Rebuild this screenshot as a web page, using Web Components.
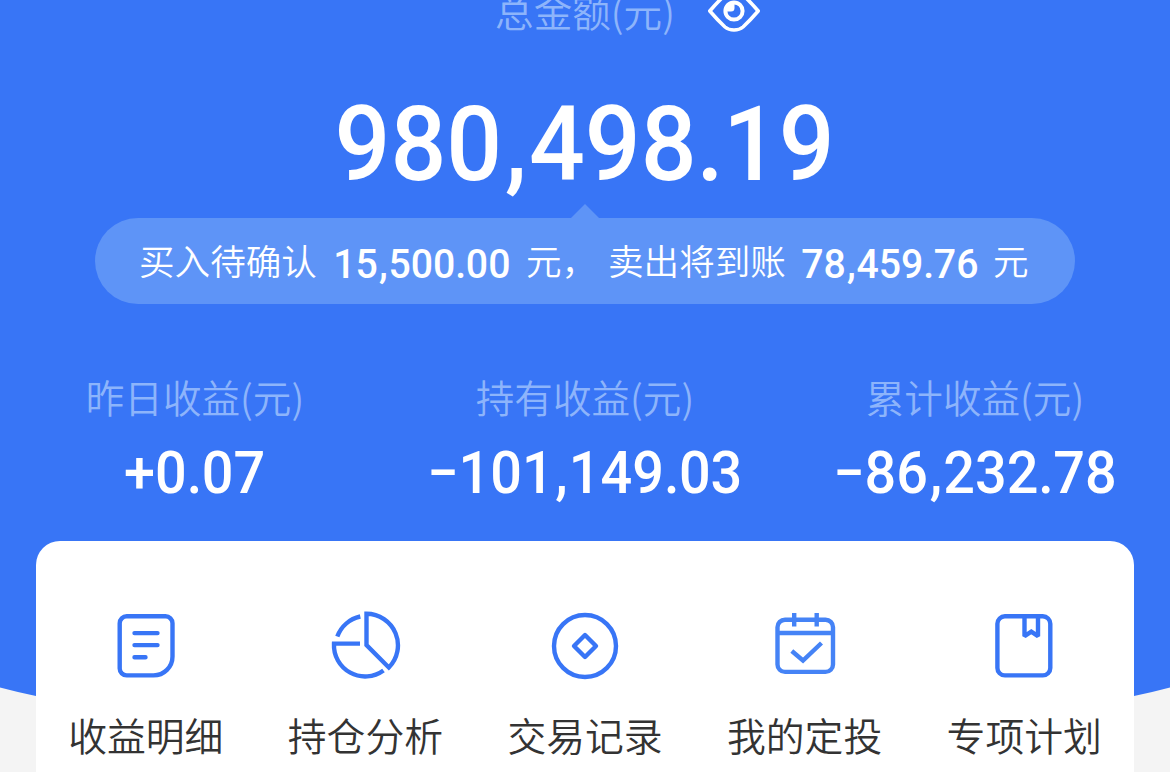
<!DOCTYPE html>
<html lang="zh-CN">
<head>
<meta charset="utf-8">
<title>总金额</title>
<style>
  :root {
    --blue: #3875f6;
    --pale: #8db4fb;
    --pill: #5e94f7;
    --ink: #333;
  }
  html, body { margin: 0; height: 772px; overflow: hidden; }
  body { background: #f4f4f4; font-family: "Noto Sans CJK SC", sans-serif; font-weight: 350; }
</style>
</head>
<body>
<fund-page>
  <total-amount label="总金额(元)" value="980,498.19"></total-amount>
  <pending-pill>
    <span>买入待确认</span><money-value size="41.5" value="15,500.00" style="width:176px;margin:5px 16px 0 17px"></money-value><span>元，</span>
    <span style="margin-left:11px">卖出将到账</span><money-value size="41.5" value="78,459.76" style="width:176px;margin:5px 15px 0 16px"></money-value><span>元</span>
  </pending-pill>
  <stat-row>
    <stat-item label="昨日收益(元)" value="+0.07"></stat-item>
    <stat-item label="持有收益(元)" value="−101,149.03"></stat-item>
    <stat-item label="累计收益(元)" value="−86,232.78"></stat-item>
  </stat-row>
  <action-card>
    <action-item icon="detail">收益明细</action-item>
    <action-item icon="pie">持仓分析</action-item>
    <action-item icon="coin">交易记录</action-item>
    <action-item icon="calendar">我的定投</action-item>
    <action-item icon="book">专项计划</action-item>
  </action-card>
</fund-page>

<script>
/* Icons share a 72x72 box, strokes inherit currentColor */
const ICONS = {
  detail: `
    <path d="M16.700 7.300H55.500A7 7 0 0 1 62.500 14.300V47.400A19 19 0 0 1 43.500 66.400H16.700A7 7 0 0 1 9.700 59.400V14.300A7 7 0 0 1 16.700 7.300Z"/>
    <path stroke-linecap="round" d="M24.500 24.100H47.500M24.500 36.100H47.500M24.500 48.200H35.500"/>`,
  pie: `
    <path d="M37.500 4.800A31.500 31.500 0 0 1 59.800 58.500L37.500 36Z"/>
    <path d="M8.300 27.500A32 32 0 0 1 31.300 7.500M31 34.600H5A31.200 31.200 0 0 0 54.500 61.500"/>`,
  coin: `
    <circle cx="36" cy="37" r="31"/>
    <path stroke-linejoin="round" d="M36 26L47 37L36 48L25 37Z"/>`,
  calendar: `
    <g stroke="#4583f6"><rect x="8.500" y="10.700" width="55.500" height="52.200" rx="7.500"/>
    <path d="M8.500 24H64M25.200 4V17.500M47.700 4V17.500M22.800 42L34 51.500L52.500 34"/></g>`,
  book: `
    <rect x="9.400" y="7.300" width="52.900" height="59.100" rx="7.500"/>
    <path stroke-miterlimit="2" d="M36.500 8V27.200L43.300 22.700L50 27.200V8"/>`
};

class FundPage extends HTMLElement {
  constructor() {
    super();
    this.attachShadow({ mode: 'open' }).innerHTML = `
      <style>
        :host { display: grid; width: 1170px; height: 772px; overflow: hidden; }
        svg, main { grid-area: 1 / 1; }
        svg { display: block; }
        main { display: flex; flex-direction: column; z-index: 1; }
      </style>
      <svg width="1170" height="772"><path fill="#3875f6" d="M0 0H1170V687.500Q1152 692.300 1134 696Q585 800 36 696Q18 692.300 0 687.500Z"/></svg>
      <main><slot></slot></main>`;
  }
}

/* Slightly condensed figures; commas and points get extra room */
class MoneyValue extends HTMLElement {
  connectedCallback() {
    const size = Number(this.getAttribute('size'));
    const text = this.getAttribute('value').replace(/[,.]/g, c => `<i class="${c === ',' ? 'comma' : 'dot'}">${c}</i>`);
    this.attachShadow({ mode: 'open' }).innerHTML = `
      <style>
        :host { display: flex; justify-content: center; color: #fff; }
        span {
          font: 500 ${size}px/1 Roboto, sans-serif; white-space: nowrap;
          transform: scaleX(.945);
        }
        i { font-style: normal; }
        .comma { margin: 0 .02em 0 .03em; }
        .dot { margin: 0 -.01em 0 0; }
      </style>
      <span>${text}</span>`;
  }
}

class TotalAmount extends HTMLElement {
  connectedCallback() {
    this.attachShadow({ mode: 'open' }).innerHTML = `
      <style>
        :host { display: block; height: 218px; }
        .head { display: grid; grid-template: 20px / 1fr auto 1fr; align-items: center; }
        .label { grid-column: 2; font-size: 38.6px; line-height: 20px; color: var(--pale); }
        svg { margin: -12px 0 -12px 32px; }
        money-value { margin-top: 73px; }
      </style>
      <div class="head">
        <span class="label">${this.getAttribute('label')}</span>
        <svg width="54" height="44" viewBox="0 0 54 44" fill="none" stroke="#fff" stroke-width="3.600" stroke-linejoin="round">
          <path d="M2.800 23Q11 13.500 18 7Q21.500 4 27 4Q32.500 4 36 7Q43 13.500 51.200 23Q43 32.500 36 39Q32.500 42 27 42Q21.500 42 18 39Q11 32.500 2.800 23Z"/>
          <circle cx="27" cy="23" r="8.600" stroke-width="4"/>
          <path d="M20 23V16H27.500V20Q27.500 23.500 24 23.500H20Z" fill="#fff" stroke="none"/>
        </svg>
      </div>
      <money-value size="104" value="${this.getAttribute('value')}"></money-value>`;
  }
}

class PendingPill extends HTMLElement {
  constructor() {
    super();
    this.attachShadow({ mode: 'open' }).innerHTML = `
      <style>
        :host {
          display: flex; align-items: center; position: relative;
          box-sizing: border-box; width: 980px; height: 86px;
          margin: 0 auto; padding-left: 44px;
          border-radius: 43px; background: var(--pill);
          color: #fff; font-size: 35.6px; line-height: 84px; white-space: nowrap;
        }
        :host::before {
          content: ''; position: absolute; left: 476px; top: -14px;
          border: solid transparent; border-width: 0 14px 14px;
          border-bottom-color: var(--pill);
        }
        ::slotted(span) { margin-top: -2px; }
      </style>
      <slot></slot>`;
  }
}

class StatRow extends HTMLElement {
  constructor() {
    super();
    this.attachShadow({ mode: 'open' }).innerHTML = `
      <style>
        :host { display: grid; grid-template-columns: repeat(3, 1fr); height: 237px; }
      </style>
      <slot></slot>`;
  }
}

class StatItem extends HTMLElement {
  connectedCallback() {
    this.attachShadow({ mode: 'open' }).innerHTML = `
      <style>
        :host { display: flex; flex-direction: column; align-items: center; padding-top: 64px; }
        .label { font-size: 38.6px; line-height: 56px; color: var(--pale); }
        money-value { margin-top: 19px; }
      </style>
      <span class="label">${this.getAttribute('label')}</span>
      <money-value size="59" value="${this.getAttribute('value')}"></money-value>`;
  }
}

class ActionCard extends HTMLElement {
  constructor() {
    super();
    this.attachShadow({ mode: 'open' }).innerHTML = `
      <style>
        :host {
          display: grid; grid-template-columns: repeat(5, 1fr);
          flex: 1; margin: 0 36px; padding-top: 68px;
          border-radius: 24px 24px 0 0; background: #fff;
        }
      </style>
      <slot></slot>`;
  }
}

class ActionItem extends HTMLElement {
  connectedCallback() {
    this.attachShadow({ mode: 'open' }).innerHTML = `
      <style>
        :host { display: flex; flex-direction: column; align-items: center; color: var(--ink); font-size: 38.8px; line-height: 56px; }
        svg { color: var(--blue); margin-bottom: 25px; }
      </style>
      <svg width="72" height="72" viewBox="0 0 72 72" fill="none" stroke="currentColor" stroke-width="4.400">${ICONS[this.getAttribute('icon')]}</svg>
      <span><slot></slot></span>`;
  }
}

customElements.define('money-value', MoneyValue);
customElements.define('total-amount', TotalAmount);
customElements.define('pending-pill', PendingPill);
customElements.define('stat-item', StatItem);
customElements.define('stat-row', StatRow);
customElements.define('action-item', ActionItem);
customElements.define('action-card', ActionCard);
customElements.define('fund-page', FundPage);
</script>
</body>
</html>
